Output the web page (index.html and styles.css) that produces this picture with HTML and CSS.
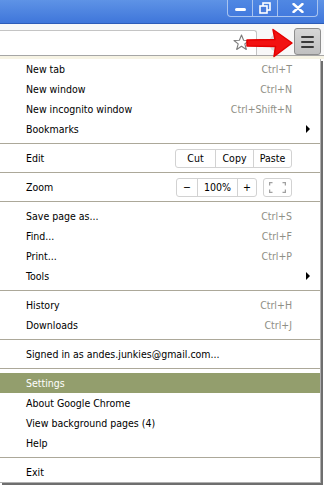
FILE: index.html
```html
<!DOCTYPE html>
<html>
<head>
    <title>Chrome menu</title>
    <link rel="stylesheet" href="styles.css">
</head>
<body>
    <div class="titlebar">
        <div class="win-buttons">
            <div class="win-btn min-btn"><span class="min-bar"></span></div>
            <div class="win-btn max-btn">
                <svg width="12" height="12" viewBox="0 0 12 12">
                    <rect x="4" y="1" width="7" height="7" fill="none" stroke="#fff" stroke-width="1.6"/>
                    <rect x="1" y="4" width="7" height="7" fill="#4a7ddb" stroke="#fff" stroke-width="1.6"/>
                </svg>
            </div>
            <div class="win-btn close-btn">
                <svg width="12" height="10" viewBox="0 0 12 10">
                    <path d="M1.5 1 L10.5 9 M10.5 1 L1.5 9" stroke="#fff" stroke-width="2.4" stroke-linecap="round"/>
                </svg>
            </div>
        </div>
    </div>

    <div class="toolbar">
        <div class="omnibox">
            <svg class="star" width="17" height="17" viewBox="0 0 17 17">
                <path d="M8.5 1 L10.6 6.3 L16 6.5 L11.8 9.9 L13.3 15.5 L8.5 12.3 L3.7 15.5 L5.2 9.9 L1 6.5 L6.4 6.3 Z" fill="#fff" stroke="#7c7c7c" stroke-width="1.1" stroke-linejoin="round"/>
            </svg>
        </div>
        <div class="ext-icon"></div>
        <div class="menu-btn">
            <span></span><span></span><span></span>
        </div>
        <svg class="red-arrow" width="48" height="30" viewBox="0 0 48 30">
            <path d="M1 12 L29 11.5 L27 1.5 L46 15 L28 28.5 L29.5 18.5 L1 18 Z" fill="#f21212" stroke="#e40000" stroke-width="1.5" stroke-linejoin="round"/>
        </svg>
    </div>
    <div class="infobar-edge"></div>

    <div class="menu">
        <div class="item"><span>New tab</span><span class="key">Ctrl+T</span></div>
        <div class="item"><span>New window</span><span class="key">Ctrl+N</span></div>
        <div class="item"><span>New incognito window</span><span class="key">Ctrl+Shift+N</span></div>
        <div class="item"><span>Bookmarks</span><span></span><span class="sub"></span></div>
        <div class="sep"></div>
        <div class="item">
            <span>Edit</span>
            <div class="btn-group">
                <span class="gbtn w40">Cut</span><span class="gbtn w38">Copy</span><span class="gbtn w38">Paste</span>
            </div>
        </div>
        <div class="sep"></div>
        <div class="item">
            <span>Zoom</span>
            <div class="zoom-ctrls">
                <div class="btn-group">
                    <span class="gbtn w21">&minus;</span><span class="gbtn w40">100%</span><span class="gbtn w19">+</span>
                </div>
                <div class="btn-group">
                    <span class="gbtn w29 fullscreen">
                        <svg width="17" height="11" viewBox="0 0 17 11">
                            <path d="M0.5 3.5 V0.5 H3.5 M13.5 0.5 H16.5 V3.5 M16.5 7.5 V10.5 H13.5 M3.5 10.5 H0.5 V7.5" fill="none" stroke="#a0a0a0" stroke-width="1.5"/>
                        </svg>
                    </span>
                </div>
            </div>
        </div>
        <div class="sep"></div>
        <div class="item"><span>Save page as...</span><span class="key">Ctrl+S</span></div>
        <div class="item"><span>Find...</span><span class="key">Ctrl+F</span></div>
        <div class="item"><span>Print...</span><span class="key">Ctrl+P</span></div>
        <div class="item"><span>Tools</span><span></span><span class="sub"></span></div>
        <div class="sep"></div>
        <div class="item"><span>History</span><span class="key">Ctrl+H</span></div>
        <div class="item"><span>Downloads</span><span class="key">Ctrl+J</span></div>
        <div class="sep"></div>
        <div class="item"><span>Signed in as andes.junkies@gmail.com...</span></div>
        <div class="sep"></div>
        <div class="item active"><span>Settings</span></div>
        <div class="item"><span>About Google Chrome</span></div>
        <div class="item"><span>View background pages (4)</span></div>
        <div class="item"><span>Help</span></div>
        <div class="sep"></div>
        <div class="item"><span>Exit</span></div>
    </div>
</body>
</html>
```

FILE: styles.css
```css
body {
    margin: 0;
    width: 324px;
    height: 486px;
    overflow: hidden;
    background-color: #fff;
    font-family: "DejaVu Sans Condensed", "DejaVu Sans", sans-serif;
    font-size: 10.5px;
    color: #000;
}

/* window title bar */
.titlebar {
    height: 23px;
    background: linear-gradient(#5e93e6, #3f76da);
    border-bottom: 1px solid #2d5cb8;
    display: flex;
    justify-content: flex-end;
}

.win-buttons {
    display: flex;
    margin-right: 6px;
    height: 16px;
    border: 1px solid #a9c4f0;
    border-top: none;
    border-radius: 0 0 4px 4px;
    background: linear-gradient(#5088e3, #437ade);
}

.win-btn {
    display: flex;
    align-items: center;
    justify-content: center;
    border-right: 1px solid #a9c4f0;
}

.win-btn:last-child {
    border-right: none;
}

.min-btn { width: 24px; }
.max-btn { width: 24px; }
.close-btn { width: 39px; }

.min-bar {
    display: block;
    width: 11px;
    height: 3px;
    margin-top: 3px;
    background-color: #fff;
    border-radius: 2px;
}

/* toolbar */
.toolbar {
    position: relative;
    height: 31px;
    background-color: #f8f8f8;
    border-bottom: 1px solid #a6a6a6;
    display: flex;
    align-items: flex-start;
}

.omnibox {
    width: 256px;
    height: 24px;
    margin-top: 6px;
    background-color: #fff;
    border-top: 1px solid #c4c4c4;
    border-right: 1px solid #c4c4c4;
    border-radius: 0 3px 0 0;
    display: flex;
    align-items: center;
    justify-content: flex-end;
}

.star {
    margin-right: 6px;
    margin-top: -1px;
}

.ext-icon {
    width: 16px;
    height: 18px;
    margin-left: 12px;
    margin-top: 10px;
    border-radius: 50%;
    background-color: #dcdcdc;
}

.menu-btn {
    width: 25px;
    height: 25px;
    margin-left: 9px;
    margin-top: 4px;
    background: linear-gradient(#d6d6d6, #c0c0c0);
    border: 1px solid #8e8e8e;
    border-radius: 3px;
    display: flex;
    flex-direction: column;
    align-items: center;
    justify-content: center;
    gap: 3px;
}

.menu-btn span {
    display: block;
    width: 13px;
    height: 2px;
    background-color: #3a3a3a;
    border-radius: 1px;
}

.red-arrow {
    position: absolute;
    left: 246px;
    top: 4px;
}

.infobar-edge {
    height: 3px;
    background-color: #f6f3e4;
}

/* menu */
.menu {
    width: 320px;
    background-color: #fff;
    border-right: 1px solid #b0b0b0;
    border-bottom: 1px solid #b0b0b0;
    box-shadow: 2px 2px 0 #6e6e6e;
}

.item {
    height: 20px;
    display: grid;
    grid-template-columns: 1fr auto 28px;
    align-items: center;
    padding-left: 26px;
    white-space: nowrap;
}

.item .key {
    color: #8f8f86;
}

.item .sub {
    width: 0;
    height: 0;
    margin-left: 14px;
    border-top: 4px solid transparent;
    border-bottom: 4px solid transparent;
    border-left: 4px solid #000;
}

.item.active {
    background-color: #939e6d;
    color: #fff;
}

.sep {
    height: 1px;
    margin: 4px 0;
    background-color: #aca899;
}

.btn-group {
    display: flex;
    height: 17px;
    border: 1px solid #d2d2d2;
    border-radius: 3px;
}

.gbtn {
    display: flex;
    align-items: center;
    justify-content: center;
    border-right: 1px solid #d2d2d2;
}

.gbtn:last-child {
    border-right: none;
}

.w40 { width: 39px; }
.w38 { width: 37px; }
.w21 { width: 20px; }
.w19 { width: 18px; }
.w29 { width: 27px; }

.zoom-ctrls {
    display: flex;
    gap: 6px;
}
```
